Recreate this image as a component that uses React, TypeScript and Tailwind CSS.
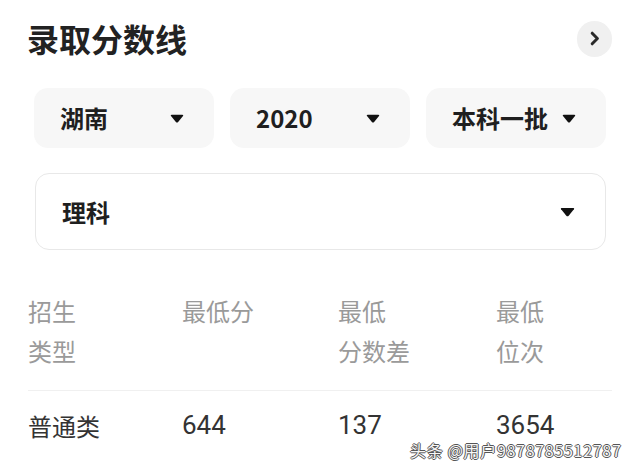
import React from "react";

const cjk = "font-['Noto_Sans_CJK_SC','Noto_Sans',sans-serif]";

function Caret({ w = 14, h = 9 }: { w?: number; h?: number }) {
  return (
    <svg width={w} height={h} viewBox="0 0 14 9" className="shrink-0">
      <path
        d="M1.6 0.8 H12.4 Q13.8 0.8 13 2 L8.1 7.9 Q7 9.1 5.9 7.9 L1 2 Q0.2 0.8 1.6 0.8 Z"
        fill="#111"
      />
    </svg>
  );
}

function Pill({ label }: { label: string }) {
  return (
    <div className="flex-1 h-[60px] rounded-[14px] bg-[#f7f7f7] flex items-center justify-between pl-[26px] pr-[30px]">
      <span className="text-[24px] leading-none font-bold text-[#1f1f1f]">{label}</span>
      <Caret />
    </div>
  );
}

export default function App() {
  const cols = ["w-[154px]", "w-[156px]", "w-[158px]", "flex-1"];
  const heads = [
    ["招生", "类型"],
    ["最低分"],
    ["最低", "分数差"],
    ["最低", "位次"],
  ];
  const row = ["普通类", "644", "137", "3654"];

  return (
    <div className={`relative w-[640px] h-[471px] overflow-hidden bg-white ${cjk}`}>
      {/* header */}
      <div className="flex items-center justify-between pt-[20px] pl-[27px] pr-[28px]">
        <h1 className="text-[32px] leading-[37px] font-bold text-[#222]">录取分数线</h1>
        <button className="w-[35px] h-[36px] rounded-full bg-[#f0f0f0] flex items-center justify-center">
          <svg width="10" height="15" viewBox="0 0 10 15">
            <path
              d="M2.2 2.2 L7.4 7.5 L2.2 12.8"
              fill="none"
              stroke="#2a2a2a"
              strokeWidth="3"
              strokeLinecap="round"
              strokeLinejoin="round"
            />
          </svg>
        </button>
      </div>

      {/* filters */}
      <div className="mt-[31px] mx-[34px] flex gap-[16px]">
        <Pill label="湖南" />
        <Pill label="2020" />
        <Pill label="本科一批" />
      </div>

      <div className="mt-[25px] ml-[35px] mr-[34px] h-[77px] rounded-[14px] border-[1.5px] border-[#e8e8e8] flex items-center justify-between pl-[26px] pr-[30px]">
        <span className="text-[24px] leading-none font-bold text-[#1f1f1f]">理科</span>
        <Caret w={15} h={10} />
      </div>

      {/* score table */}
      <div className="mt-[41px] ml-[28px] mr-[28px]">
        <div className="flex pb-[19px] border-b border-[#f0f0f0]">
          {heads.map((lines, i) => (
            <div key={i} className={`${cols[i]} text-[24px] leading-[40px] text-[#9a9a9a]`}>
              {lines.map((l) => (
                <div key={l}>{l}</div>
              ))}
            </div>
          ))}
        </div>
        <div className="flex pt-[21px]">
          {row.map((v, i) => (
            <div
              key={v}
              className={`${cols[i]} leading-[27px] text-[#333] ${
                i === 0 ? "text-[24px]" : "text-[26px] font-['Roboto',sans-serif]"
              }`}
            >
              {v}
            </div>
          ))}
        </div>
      </div>

      {/* watermark */}
      <div className="absolute left-[410px] top-[442px] text-[16px] leading-[16px] tracking-[0.7px] text-[#f6f6f6] whitespace-nowrap [text-shadow:1px_0_#555,-1px_0_#555,0_1px_#555,0_-1px_#555]">
        头条 @用户9878785512787
      </div>
    </div>
  );
}
